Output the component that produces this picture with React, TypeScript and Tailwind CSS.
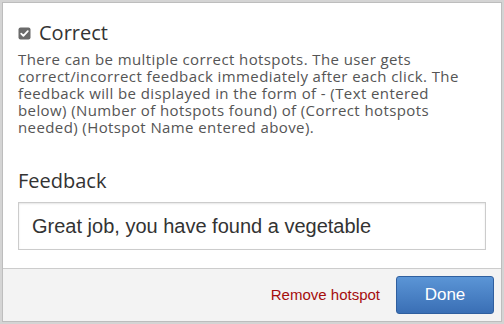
import React, { FC } from 'react';

const CheckIcon: FC = () => (
  <svg width="13" height="13" viewBox="0 0 13 13" className="shrink-0">
    <rect x="0.5" y="0.5" width="12" height="12" rx="2" fill="#6b6b6b" />
    <path d="M3.2 6.6 L5.4 8.9 L9.8 4.2" stroke="#fff" strokeWidth="1.8" fill="none" strokeLinecap="round" strokeLinejoin="round" />
  </svg>
);

const App: FC = () => {
  return (
    <div className="w-[504px] h-[324px] bg-[#d4d4d4] p-[2px] overflow-hidden">
      <div className="h-full flex flex-col bg-white border border-[#bdbdbd]">
        {/* body */}
        <div className="flex-1 px-[15px] pt-[16px] font-['Open_Sans',sans-serif]">
          <label className="flex items-center gap-[8px]">
            <CheckIcon />
            <span className="text-[20px] leading-[28px] text-[#333]">Correct</span>
          </label>
          <p className="mt-[4px] pr-[12px] text-[15px] leading-[17px] tracking-[0.4px] text-[#555]">
            There can be multiple correct hotspots. The user gets correct/incorrect feedback immediately after each click. The feedback will be displayed in the form of - (Text entered below) (Number of hotspots found) of (Correct hotspots needed) (Hotspot Name entered above).
          </p>
          <h3 className="mt-[31px] text-[20px] leading-[28px] text-[#333]">Feedback</h3>
          <div className="mt-[7px] h-[48px] flex items-center border border-[#ccc] shadow-[inset_0_1px_2px_rgba(0,0,0,0.1)] px-[13px] font-['Liberation_Sans',Arial,sans-serif] text-[20px] text-[#333]">
            Great job, you have found a vegetable
          </div>
        </div>
        {/* footer */}
        <div className="h-[53px] border-t border-[#ccc] bg-[#f3f3f3] flex items-center justify-end gap-[16px] pr-[7px] font-['Liberation_Sans',Arial,sans-serif]">
          <button className="text-[15px] text-[#a50d0d]">Remove hotspot</button>
          <button className="w-[98px] h-[38px] rounded-[3px] border border-[#2f5f9f] bg-gradient-to-b from-[#5b95d6] to-[#3a6fb5] text-white text-[17px]">
            Done
          </button>
        </div>
      </div>
    </div>
  );
};

export default App;
